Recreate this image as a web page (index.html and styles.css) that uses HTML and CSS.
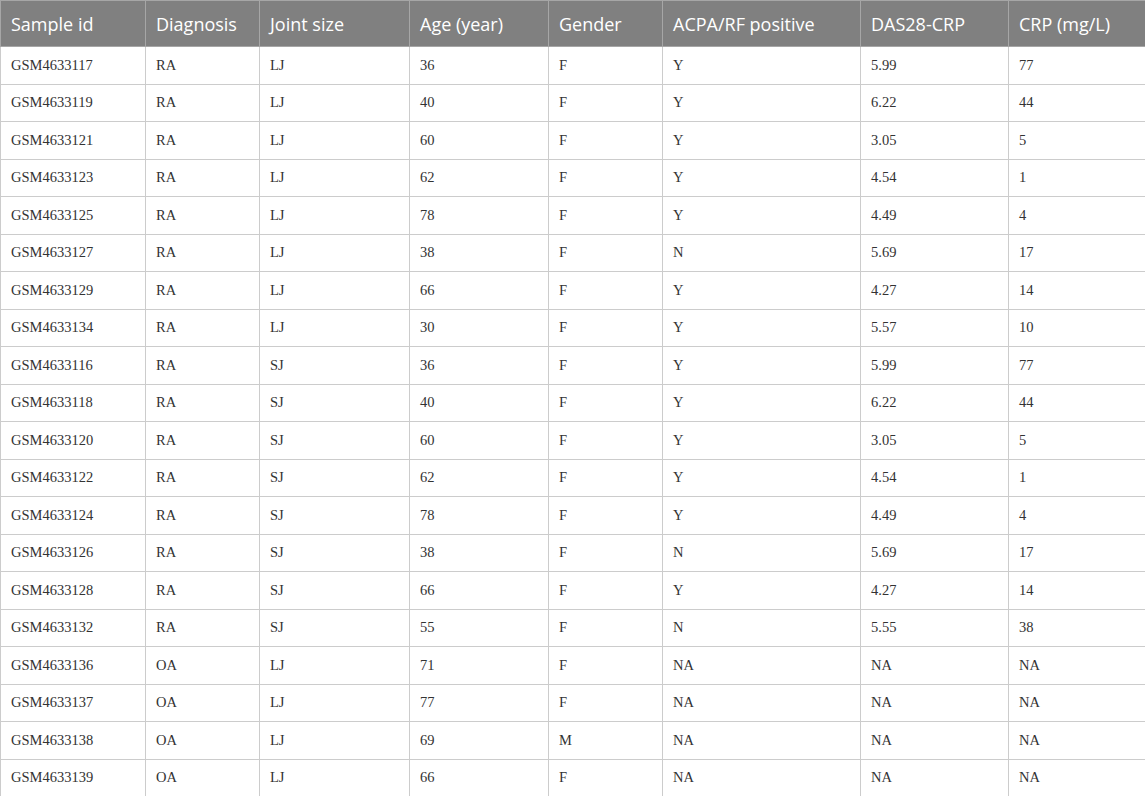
FILE: index.html
```html
<!DOCTYPE html>
<html>
<head>
<meta charset="utf-8">
<link rel="stylesheet" href="styles.css">
</head>
<body>
<table class="data">
  <colgroup>
    <col class="c1"><col class="c2"><col class="c3"><col class="c4"><col class="c5"><col class="c6"><col class="c7"><col class="c8">
  </colgroup>
  <thead>
    <tr><th>Sample id</th><th>Diagnosis</th><th>Joint size</th><th>Age (year)</th><th>Gender</th><th>ACPA/RF positive</th><th>DAS28-CRP</th><th>CRP (mg/L)</th></tr>
  </thead>
  <tbody>
    <tr><td>GSM4633117</td><td>RA</td><td>LJ</td><td>36</td><td>F</td><td>Y</td><td>5.99</td><td>77</td></tr>
    <tr><td>GSM4633119</td><td>RA</td><td>LJ</td><td>40</td><td>F</td><td>Y</td><td>6.22</td><td>44</td></tr>
    <tr><td>GSM4633121</td><td>RA</td><td>LJ</td><td>60</td><td>F</td><td>Y</td><td>3.05</td><td>5</td></tr>
    <tr><td>GSM4633123</td><td>RA</td><td>LJ</td><td>62</td><td>F</td><td>Y</td><td>4.54</td><td>1</td></tr>
    <tr><td>GSM4633125</td><td>RA</td><td>LJ</td><td>78</td><td>F</td><td>Y</td><td>4.49</td><td>4</td></tr>
    <tr><td>GSM4633127</td><td>RA</td><td>LJ</td><td>38</td><td>F</td><td>N</td><td>5.69</td><td>17</td></tr>
    <tr><td>GSM4633129</td><td>RA</td><td>LJ</td><td>66</td><td>F</td><td>Y</td><td>4.27</td><td>14</td></tr>
    <tr><td>GSM4633134</td><td>RA</td><td>LJ</td><td>30</td><td>F</td><td>Y</td><td>5.57</td><td>10</td></tr>
    <tr><td>GSM4633116</td><td>RA</td><td>SJ</td><td>36</td><td>F</td><td>Y</td><td>5.99</td><td>77</td></tr>
    <tr><td>GSM4633118</td><td>RA</td><td>SJ</td><td>40</td><td>F</td><td>Y</td><td>6.22</td><td>44</td></tr>
    <tr><td>GSM4633120</td><td>RA</td><td>SJ</td><td>60</td><td>F</td><td>Y</td><td>3.05</td><td>5</td></tr>
    <tr><td>GSM4633122</td><td>RA</td><td>SJ</td><td>62</td><td>F</td><td>Y</td><td>4.54</td><td>1</td></tr>
    <tr><td>GSM4633124</td><td>RA</td><td>SJ</td><td>78</td><td>F</td><td>Y</td><td>4.49</td><td>4</td></tr>
    <tr><td>GSM4633126</td><td>RA</td><td>SJ</td><td>38</td><td>F</td><td>N</td><td>5.69</td><td>17</td></tr>
    <tr><td>GSM4633128</td><td>RA</td><td>SJ</td><td>66</td><td>F</td><td>Y</td><td>4.27</td><td>14</td></tr>
    <tr><td>GSM4633132</td><td>RA</td><td>SJ</td><td>55</td><td>F</td><td>N</td><td>5.55</td><td>38</td></tr>
    <tr><td>GSM4633136</td><td>OA</td><td>LJ</td><td>71</td><td>F</td><td>NA</td><td>NA</td><td>NA</td></tr>
    <tr><td>GSM4633137</td><td>OA</td><td>LJ</td><td>77</td><td>F</td><td>NA</td><td>NA</td><td>NA</td></tr>
    <tr><td>GSM4633138</td><td>OA</td><td>LJ</td><td>69</td><td>M</td><td>NA</td><td>NA</td><td>NA</td></tr>
    <tr><td>GSM4633139</td><td>OA</td><td>LJ</td><td>66</td><td>F</td><td>NA</td><td>NA</td><td>NA</td></tr>
  </tbody>
</table>
</body>
</html>
```

FILE: styles.css
```css
html, body {
  margin: 0;
  padding: 0;
  background: #ffffff;
}

.data {
  width: 1145px;
  border-collapse: collapse;
  table-layout: fixed;
}

.c1 { width: 145px; }
.c2 { width: 114px; }
.c3 { width: 150px; }
.c4 { width: 139px; }
.c5 { width: 114px; }
.c6 { width: 198px; }
.c7 { width: 148px; }
.c8 { width: 137px; }

.data th {
  height: 46px;
  box-sizing: border-box;
  padding: 0 10px;
  background: #808080;
  color: #ffffff;
  font-family: "Open Sans", "Noto Sans", sans-serif;
  font-weight: 400;
  font-size: 18px;
  text-align: left;
  border: 1px solid #a6a6a6;
  white-space: nowrap;
}

.data td {
  height: 37.5px;
  box-sizing: border-box;
  padding: 0 10px;
  color: #333333;
  font-family: "Liberation Serif", "Times New Roman", serif;
  font-size: 14.5px;
  text-align: left;
  border: 1px solid #cccccc;
  white-space: nowrap;
}
```
